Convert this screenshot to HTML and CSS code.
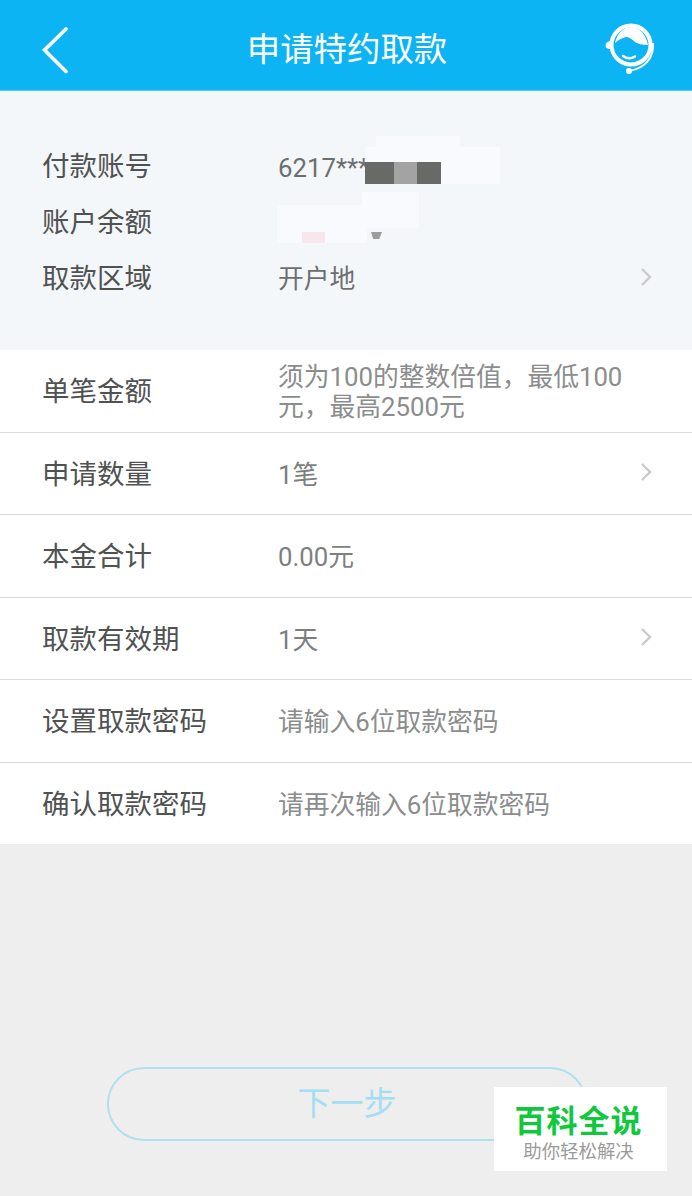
FILE: index.html
```html
<!DOCTYPE html>
<html lang="zh-CN">
<head>
<meta charset="utf-8">
<title>申请特约取款</title>
<link rel="stylesheet" href="styles.css">
</head>
<body>
<div class="page">
  <header class="topbar">
    <svg class="back" width="30" height="48" viewBox="0 0 30 48"><path d="M25 3 L3.500 24 L25 45.500" fill="none" stroke="#fff" stroke-width="3.600" stroke-linecap="round"/></svg>
    <h1 class="title">申请特约取款</h1>
    <svg class="agent" width="52" height="54" viewBox="0 0 52 54">
      <circle cx="27" cy="22" r="19.500" fill="none" stroke="#fff" stroke-width="4"/>
      <path d="M11 20 C13 10 20 4 27 4 C36 4 42 12 44 22 C38 22 34 21 31 19 C28 16 25 14 22 14 C18 15 14 17 11 20 Z" fill="#fff"/>
      <path d="M19 33 C23 36 27 36 31 33.500" fill="none" stroke="#fff" stroke-width="2.400" stroke-linecap="round"/>
      <path d="M6 18 C0 19 0 26 6 26 Z" fill="#fff"/>
      <path d="M49 20 C50 34 42 45 25 48" fill="none" stroke="#fff" stroke-width="2"/>
      <circle cx="25" cy="48" r="3" fill="#fff"/>
    </svg>
  </header>

  <section class="info">
    <div class="info-row"><span class="label">付款账号</span><span class="value card-no">6217***</span></div>
    <div class="info-row"><span class="label">账户余额</span></div>
    <div class="info-row"><span class="label">取款区域</span><span class="value">开户地</span>
      <svg class="chev" width="12" height="20" viewBox="0 0 12 20"><path d="M2 2 L10 10 L2 18" fill="none" stroke="#c8cacc" stroke-width="2.400"/></svg>
    </div>
    <div class="mask mask-a"></div>
    <div class="mask mask-b"></div>
    <div class="mask mask-c"></div>
    <div class="mask mask-d"></div>
    <div class="pix pix-1"></div>
    <div class="pix pix-2"></div>
    <div class="pix pix-3"></div>
    <div class="pix pix-4"></div>
    <div class="pix pix-5"></div>
  </section>

  <section class="form">
    <div class="row"><span class="label">单笔金额</span><span class="value hint">须为100的整数倍值，最低100元，最高2500元</span></div>
    <div class="row"><span class="label">申请数量</span><span class="value">1笔</span>
      <svg class="chev" width="12" height="20" viewBox="0 0 12 20"><path d="M2 2 L10 10 L2 18" fill="none" stroke="#c8cacc" stroke-width="2.400"/></svg>
    </div>
    <div class="row"><span class="label">本金合计</span><span class="value">0.00元</span></div>
    <div class="row"><span class="label">取款有效期</span><span class="value">1天</span>
      <svg class="chev" width="12" height="20" viewBox="0 0 12 20"><path d="M2 2 L10 10 L2 18" fill="none" stroke="#c8cacc" stroke-width="2.400"/></svg>
    </div>
    <div class="row"><span class="label">设置取款密码</span><span class="value muted">请输入6位取款密码</span></div>
    <div class="row"><span class="label">确认取款密码</span><span class="value muted">请再次输入6位取款密码</span></div>
  </section>

  <div class="actions">
    <button class="next" type="button">下一步</button>
  </div>

  <aside class="badge">
    <span class="badge-title">百科全说</span>
    <span class="badge-sub">助你轻松解决</span>
  </aside>
</div>
</body>
</html>
```
FILE: styles.css
```css
* { box-sizing: border-box; }
html, body { margin: 0; padding: 0; }
body {
  font-family: Roboto, "Noto Sans CJK SC", sans-serif;
  background: #eeeeee;
}
.page {
  position: relative;
  width: 692px;
  height: 1196px;
  overflow: hidden;
  display: flex;
  flex-direction: column;
  background: #eeeeee;
}
.topbar {
  height: 91px;
  flex: none;
  padding: 10px 0 0 2px;
  background: #0db4f3;
  border-bottom: 1px solid #53cdf2;
  display: flex;
  align-items: center;
  justify-content: center;
  position: relative;
}
.title {
  margin: 0;
  font-size: 33.400px;
  font-weight: 400;
  color: #fff;
  line-height: 1;
}
.back { position: absolute; left: 41px; top: 26px; }
.agent { position: absolute; left: 604px; top: 23px; }
.info {
  position: relative;
  height: 259px;
  flex: none;
  padding: 47px 0 44px;
  background: #f4f7fa;
}
.info-row {
  height: 56px;
  display: flex;
  align-items: center;
  position: relative;
}
.label {
  flex: none;
  width: 278px;
  padding-left: 42px;
  font-size: 27.500px;
  color: #505252;
  line-height: 1.2;
}
.value {
  font-size: 25.750px;
  color: #7d7f7f;
  line-height: 1.2;
  padding-top: 2px;
}
.info .value { color: #6d6f6f; }
.info .card-no { padding-top: 4px; }
.chev { position: absolute; left: 640px; top: 50%; margin-top: -11px; }
.form { flex: none; background: #fff; }
.row {
  position: relative;
  height: 82.500px;
  padding-top: 2px;
  display: flex;
  align-items: center;
  border-bottom: 1px solid #dedede;
}
.row:last-child { height: 81.500px; border-bottom: 0; }
.hint {
  flex: 1;
  padding: 0 60px 0 0;
  line-height: 30px;
  color: #8b8d8d;
}
.muted { color: #8b8d8d; }
.actions {
  flex: 1;
  display: flex;
  align-items: flex-end;
  padding: 0 0 55px 107px;
}
.next {
  width: 480px;
  height: 74px;
  border: 2px solid #aee0f0;
  border-radius: 37px;
  background: transparent;
  color: #a5def2;
  font: inherit;
  font-size: 33px;
  padding: 0 0 7px;
}
.badge {
  position: absolute;
  left: 494px;
  top: 1087px;
  width: 173px;
  height: 84px;
  padding: 10px 4px 0 0;
  background: #fff;
  display: flex;
  flex-direction: column;
  align-items: center;
  justify-content: center;
}
.badge-title {
  font-size: 31px;
  font-weight: 700;
  color: #0fc83c;
  line-height: 36px;
  letter-spacing: 1px;
}
.badge-sub {
  font-size: 18.400px;
  color: #9a9a9a;
  line-height: 24px;
}
.mask { position: absolute; background: #f8fafd; }
.mask-a { left: 376px; top: 45px; width: 84px; height: 20px; }
.mask-b { left: 365px; top: 56px; width: 135px; height: 37px; }
.mask-c { left: 277px; top: 114px; width: 90px; height: 38px; }
.mask-d { left: 362px; top: 101px; width: 57px; height: 36px; }
.pix { position: absolute; }
.pix-1 { left: 365px; top: 71px; width: 29px; height: 22px; background: #686a68; }
.pix-2 { left: 394px; top: 71px; width: 23px; height: 22px; background: #a3a3a3; }
.pix-3 { left: 417px; top: 71px; width: 24px; height: 22px; background: #686a68; }
.pix-4 { left: 302px; top: 141px; width: 23px; height: 11px; background: #f8e6ec; }
.pix-5 {
  left: 371px;
  top: 141px;
  width: 11px;
  height: 7px;
  background: #9c9c9c;
  clip-path: polygon(0 0, 100% 0, 75% 100%, 20% 100%);
}
```
